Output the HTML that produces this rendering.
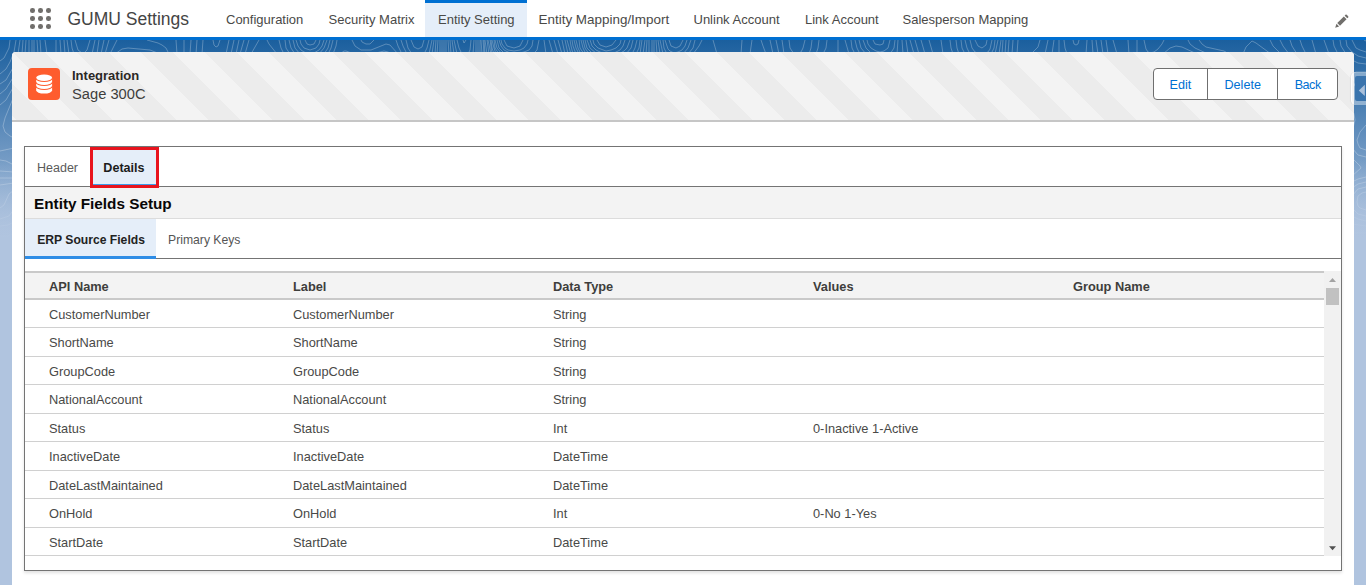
<!DOCTYPE html>
<html><head><meta charset="utf-8">
<style>
*{box-sizing:border-box;margin:0;padding:0}
html,body{width:1366px;height:585px;overflow:hidden}
body{position:relative;background:#b0c4df;font-family:"Liberation Sans",sans-serif;color:#080707}
.a{position:absolute;white-space:nowrap;line-height:1}
#nav{position:absolute;left:0;top:0;width:1366px;height:40px;background:#fff;border-bottom:3px solid #0070d2}
.dot{position:absolute;width:4.6px;height:4.6px;border-radius:50%;background:#706e6b}
.tab{font-size:13px;color:#494947;top:13.1px}
#band{position:absolute;left:0;top:40px;width:1366px;height:200px;background:linear-gradient(to top,rgba(27,95,158,0) 0,#1b5f9e 100%)}
#band2{position:absolute;left:0;top:40px;width:1366px;height:200px;background:linear-gradient(to bottom,rgba(176,196,223,0) 60%,#b0c4df 100%)}
#card{position:absolute;left:12px;top:52px;width:1342px;height:560px;background:#fff;border-radius:4px 4px 0 0;overflow:hidden}
#hdr{position:absolute;left:0;top:0;width:1342px;height:70px;background-color:#f3f3f3;
background-image:linear-gradient(45deg,rgba(0,0,0,.028) 25%,transparent 25%,transparent 50%,rgba(0,0,0,.028) 50%,rgba(0,0,0,.028) 75%,transparent 75%,transparent);
background-size:64px 64px;border-bottom:2px solid #c6c6c6}
.btn{position:absolute;top:68px;height:32px;border:1px solid #6f6f6f;background:#fff}
.btxt{font-size:12.6px;color:#0070d2;top:79.1px}
#box{position:absolute;left:24px;top:146px;width:1318px;height:425px;border:1px solid #747474;box-shadow:0 2px 3px rgba(0,0,0,.12)}
.th{font-size:12.8px;font-weight:bold;color:#3e3e3c}
.td{font-size:12.8px;color:#494947}
.rl{position:absolute;left:25px;width:1299px;height:1px;background:#d0d0d0}
</style></head><body>
<div id="nav"></div>
<!-- waffle -->
<div class="dot" style="left:30px;top:8.1px"></div><div class="dot" style="left:38.2px;top:8.1px"></div><div class="dot" style="left:46.4px;top:8.1px"></div>
<div class="dot" style="left:30px;top:16.2px"></div><div class="dot" style="left:38.2px;top:16.2px"></div><div class="dot" style="left:46.4px;top:16.2px"></div>
<div class="dot" style="left:30px;top:24.3px"></div><div class="dot" style="left:38.2px;top:24.3px"></div><div class="dot" style="left:46.4px;top:24.3px"></div>
<div class="a" style="left:67.5px;top:10.9px;font-size:17.5px;color:#444">GUMU Settings</div>
<div style="position:absolute;left:425px;top:0;width:102px;height:37px;background:#e5eef9;border-top:3px solid #0070d2"></div>
<div class="a tab" style="left:226px">Configuration</div>
<div class="a tab" style="left:328.5px">Security Matrix</div>
<div class="a tab" style="left:438px">Entity Setting</div>
<div class="a tab" style="left:538.5px;font-size:13.45px">Entity Mapping/Import</div>
<div class="a tab" style="left:693.5px">Unlink Account</div>
<div class="a tab" style="left:805px">Link Account</div>
<div class="a tab" style="left:902.5px">Salesperson Mapping</div>
<!-- pencil -->
<svg style="position:absolute;left:1333px;top:12px" width="18" height="18" viewBox="0 0 18 18">
<g fill="#706e6b" transform="translate(2.2 15.8) scale(0.9) translate(-2 -16)"><path d="M2 16 L3.4 11.6 L6.4 14.6 Z"/><path d="M4.3 10.7 L11.6 3.4 L14.6 6.4 L7.3 13.7 Z"/><path d="M12.5 2.5 L13.4 1.6 Q14.1 1 14.8 1.6 L16.4 3.2 Q17 3.9 16.4 4.6 L15.5 5.5 Z"/></g>
</svg>
<div id="band"></div><svg id="topo" style="position:absolute;left:0;top:40px" width="1366" height="200" viewBox="0 0 1366 200"><path fill="none" stroke="#fff" stroke-opacity=".3" stroke-width="0.9" d="M597 0 L600 5 L606 7 L612 5 L616 0 M593 0 L594 4 L598 8 L606 11 L611 10 L616 8 L620 4 L621 0 M463 0 L464 3 L466 0 M590 0 L592 6 L596 10 L602 13 L608 14 L614 13 L620 10 L623 6 L625 0 M457 0 L459 8 L462 14 M468 14 L470 10 L471 0 M587 0 L590 8 L597 14 M619 14 L624 11 L627 8 L630 0 M454 0 L457 14 M473 14 L474 0 M585 0 L587 8 L593 14 M626 14 L631 8 L633 0 M452 0 L454 14 M476 14 L476 0 M583 0 L585 8 L589 14 M632 14 L635 8 L637 0 M450 0 L451 14 M478 14 L478 0 M581 0 L583 8 L586 14 M636 14 L639 8 L640 0 M873 0 L875 4 L880 5 L883 4 L884 0 M448 0 L449 14 M480 14 L480 0 M579 0 L580 8 L584 14 M640 14 L642 0 M867 0 L868 4 L871 8 L876 11 L880 12 L884 11 L888 8 L890 0 M1073 0 L1074 4 L1076 5 L1078 4 L1079 0 M1364 0 L1366 1 M446 0 L446 14 M482 14 L481 0 M576 0 L578 8 L581 14 M643 14 L645 0 M863 0 L866 8 L872 14 M890 14 L894 8 L895 0 M1064 0 L1065 8 L1067 14 M1086 14 L1087 0 M1352 0 L1354 4 L1356 8 L1360 10 L1366 12 M1366 152 L1362 153 L1358 156 L1357 162 L1358 166 L1360 168 L1366 170 M444 0 L444 14 M484 14 L483 0 M574 0 L576 8 L579 14 M646 14 L647 0 M859 0 L861 8 L866 14 M897 14 L898 0 M1059 0 L1059 14 M1093 14 L1092 0 M1346 0 L1347 6 L1352 12 L1358 16 L1366 18 M1366 147 L1358 149 L1352 156 M1352 168 L1358 174 L1366 176 M442 0 L442 14 M485 14 L484 0 M572 0 L573 6 L576 14 M649 14 L649 0 M855 0 L857 8 L860 14 M903 14 L902 0 M1054 0 L1052 14 M1098 14 L1096 0 M1340 0 L1341 6 L1346 14 M1352 20 L1358 23 L1366 24 M142 14 L126 14 M1366 85 L1360 92 L1357 100 L1358 104 L1360 108 L1366 110 M1366 142 L1358 144 L1352 148 M1352 176 L1358 179 L1366 181 M440 0 L440 14 M487 14 L485 0 M570 0 L571 6 L573 14 M652 14 L652 0 M851 0 L852 8 L855 14 M908 14 L906 0 M1048 0 L1045 14 M1103 14 L1101 0 M1333 0 L1334 6 L1338 14 M1352 69 L1354 74 L1355 80 L1352 92 M1352 108 L1358 115 L1366 117 M160 14 L150 10 L128 8 L122 9 L115 14 M1366 53 L1362 52 L1358 50 L1355 46 L1352 39 M1352 34 L1356 32 L1366 32 M14 193 L8 196 L0 196 M1366 137 L1358 139 L1352 142 M1352 184 L1366 186 M45 0 L47 14 M56 14 L56 0 M117 0 L110 14 M14 182 L8 185 L0 186 M259 0 L251 14 M169 14 L166 8 L162 5 L158 3 L147 0 M392 14 L388 12 L384 11 L372 14 M354 14 L346 11 L344 11 L340 14 M277 14 L269 4 L267 0 M438 0 L437 14 M489 14 L487 0 M567 0 L571 14 M654 14 L654 0 M845 0 L849 14 M914 14 L910 0 M1040 0 L1038 7 L1031 14 M1108 14 L1106 0 M1324 0 L1329 14 M1352 118 L1360 126 L1361 128 L1352 136 M1352 193 L1366 193 M40 0 L41 14 M61 14 L60 0 M109 0 L105 14 M14 168 L12 172 L9 176 L0 179 M249 0 L245 14 M177 14 L176 0 M337 0 L336 6 L333 14 M284 14 L281 8 L279 0 M398 14 L390 5 L386 4 L371 10 L361 10 L355 6 L352 0 M436 0 L435 14 M565 0 L568 14 M491 14 L488 0 M838 0 L838 14 M707 14 L704 13 L701 14 M657 14 L656 0 M752 0 L750 14 M766 14 L763 6 L761 0 M919 14 L915 0 M1018 0 L1017 14 M1117 14 L1113 0 M1312 0 L1316 14 M37 0 L38 14 M65 14 L64 0 M104 0 L101 14 M14 150 L9 154 L4 165 L0 168 M244 0 L240 14 M184 14 L184 0 M333 0 L331 8 L328 14 M290 14 L286 8 L285 0 M374 0 L370 4 L366 4 L362 2 L361 0 M434 0 L432 14 M402 14 L398 6 L396 0 M562 0 L565 14 M492 14 L490 0 M702 0 L699 6 L693 14 M660 14 L658 0 M742 0 L741 14 M717 14 L713 0 M827 0 L826 8 L823 14 M773 14 L770 0 M1013 0 L1012 14 M925 14 L921 0 M1129 14 L1128 0 M1300 0 L1302 6 L1306 14 M1186 14 L1178 13 L1172 14 M34 0 L34 14 M14 143 L0 145 M99 0 L97 14 M69 14 L67 0 M239 0 L236 14 M190 14 L191 0 M330 0 L328 8 L324 14 M295 14 L291 8 L289 0 M432 0 L429 14 M407 14 L403 6 L401 0 M558 0 L562 14 M494 14 L492 8 L491 0 M695 0 L693 8 L688 14 M663 14 L660 0 M819 0 L818 8 L816 14 M779 14 L776 0 M1009 0 L1008 14 M933 14 L929 0 M1290 0 L1292 6 L1297 14 M1197 14 L1182 7 L1176 6 L1170 8 L1163 14 M1137 14 L1137 0 M32 0 L32 14 M14 69 L13 78 L14 85 M14 138 L0 138 M95 0 L92 14 M74 14 L72 8 L71 0 M234 0 L231 14 M196 14 L197 0 M327 0 L324 8 L319 14 M300 14 L295 8 L293 0 M429 0 L427 8 L424 14 M412 14 L408 8 L406 0 M554 0 L558 14 M496 14 L494 8 L492 0 M691 0 L688 8 L683 14 M667 14 L664 8 L663 0 M812 0 L811 8 L809 14 M784 14 L782 0 M1006 0 L1005 14 M943 14 L941 0 M1164 0 L1162 4 L1158 9 L1154 12 L1150 13 L1148 12 L1146 9 L1144 0 M1280 0 L1283 6 L1289 14 M1208 14 L1195 8 L1190 4 L1188 0 M29 0 L29 14 M14 56 L5 78 L3 86 L5 92 L10 96 L14 98 M14 132 L0 131 M90 0 L87 10 L84 13 L82 13 L78 10 L75 0 M229 0 L226 14 M202 14 L203 0 M324 0 L322 6 L319 10 L314 13 L310 14 L304 12 L301 10 L298 6 L296 0 M424 0 L422 7 L418 9 L414 7 L411 0 M549 0 L553 14 M499 14 L495 8 L494 0 M687 0 L685 6 L682 10 L678 12 L674 13 L670 11 L668 9 L665 0 M805 0 L803 8 L801 12 L798 14 M794 14 L790 8 L789 0 M1003 0 L1002 14 M953 14 L951 8 L950 0 M1270 0 L1273 6 L1281 14 M1229 14 L1224 11 L1206 7 L1202 4 L1199 0 M26 0 L25 14 M14 46 L6 60 L0 65 M220 0 L218 6 L216 7 L214 5 L213 0 M320 0 L319 4 L316 8 L310 10 L304 8 L301 4 L300 0 M544 0 L546 14 M502 14 L497 8 L495 0 M683 0 L680 6 L676 8 L671 6 L669 0 M1001 0 L999 14 M959 14 L957 8 L956 0 M1243 14 L1246 7 L1252 1 L1256 3 L1271 14 M0 111 L14 108 M14 125 L6 121 L0 120 M23 0 L22 14 M14 36 L6 49 L0 54 M316 0 L314 4 L310 5 L307 4 L305 0 M539 0 L537 10 L533 14 M505 14 L499 8 L497 0 M998 0 L995 14 M965 14 L962 8 L961 0 M20 0 L18 14 M14 26 L6 40 L0 44 M533 0 L532 6 L529 10 L524 12 L516 14 L510 13 L504 10 L501 6 L499 0 M995 0 L994 8 L991 14 M970 14 L967 8 L965 0 M16 0 L14 12 L10 22 L6 29 L0 34 M528 0 L527 4 L524 8 L520 10 L514 11 L508 10 L505 8 L502 4 L501 0 M992 0 L990 9 L988 12 L984 14 M979 14 L975 12 L972 8 L970 0 M10 0 L9 8 L6 14 L4 18 L0 21 M523 0 L520 6 L514 8 L507 6 L504 0 M987 0 L986 5 L982 8 L978 6 L975 0"/></svg><div id="band2"></div>
<div id="card">
  <div id="hdr"></div>
</div>
<!-- utility toggle -->
<div style="position:absolute;left:1350.5px;top:72px;width:30px;height:33px;border-radius:5px;background:rgba(255,255,255,.4);border-left:1.5px solid rgba(255,255,255,.9);box-shadow:-1px 0 1px rgba(0,0,0,.06)"></div>
<div style="position:absolute;left:1355px;top:76px;width:20px;height:25px;border-radius:2px;background:#3a74ad"></div>
<svg style="position:absolute;left:1355px;top:76px" width="11" height="25" viewBox="0 0 11 25"><path d="M3.8 14.6 L9.8 8.8 L9.8 20 Z" fill="#a9c0db"/></svg>
<!-- header contents -->
<div style="position:absolute;left:28px;top:68px;width:32px;height:32px;border-radius:4px;background:#fe5c2e"></div>
<svg style="position:absolute;left:28px;top:68px" width="32" height="32" viewBox="0 0 32 32">
<path fill="#fff" d="M8.2 9.75 A7.95 3.25 0 0 1 24.1 9.75 L24.1 22.35 A7.95 3.25 0 0 1 8.2 22.35 Z"/>
<g fill="none" stroke="#fe5c2e" stroke-width="1.1">
<path d="M8 10.3 A8.15 3.25 0 0 0 24.3 10.3"/>
<path d="M8 14.3 A8.15 3.25 0 0 0 24.3 14.3"/>
<path d="M8 18.3 A8.15 3.25 0 0 0 24.3 18.3"/>
</g></svg>
<div class="a" style="left:72px;top:69px;font-size:13px;font-weight:bold;color:#2b2826">Integration</div>
<div class="a" style="left:72px;top:87.3px;font-size:14.7px;color:#3e3e3c">Sage 300C</div>
<div class="btn" style="left:1153px;width:56px;border-radius:4px 0 0 4px"></div>
<div class="btn" style="left:1207px;width:71px;border-radius:0"></div>
<div class="btn" style="left:1277px;width:61px;border-radius:0 4px 4px 0"></div>
<div class="a btxt" style="left:1169.5px">Edit</div>
<div class="a btxt" style="left:1224.5px">Delete</div>
<div class="a btxt" style="left:1294.7px;letter-spacing:-0.5px">Back</div>

<!-- content box -->
<div id="box"></div>
<div style="position:absolute;left:25px;top:186px;width:1316px;height:1px;background:#747474"></div>
<div style="position:absolute;left:25px;top:187px;width:1316px;height:32px;background:#f3f3f3;border-bottom:1px solid #dcdcdc"></div>
<div style="position:absolute;left:91px;top:148px;width:67px;height:38px;background:#e5eef9;border-bottom:2px solid #3d9be9"></div>
<div style="position:absolute;left:90px;top:147px;width:69px;height:41px;border:3px solid #e8141e"></div>
<div class="a" style="left:37px;top:162.3px;font-size:12.5px;color:#5a5a5a">Header</div>
<div class="a" style="left:103.3px;top:162.2px;font-size:12.6px;font-weight:bold;color:#1c1c1c">Details</div>
<div class="a" style="left:34px;top:195.6px;font-size:15.3px;font-weight:bold;color:#080707">Entity Fields Setup</div>
<div style="position:absolute;left:25px;top:219px;width:131px;height:40px;background:#e5eef9;border-bottom:3px solid #2e8de6"></div>
<div style="position:absolute;left:156px;top:258px;width:1185px;height:1px;background:#747474"></div>
<div class="a" style="left:37.2px;top:233.6px;font-size:12.15px;font-weight:bold;color:#222">ERP Source Fields</div>
<div class="a" style="left:168px;top:233.9px;font-size:12.2px;color:#555">Primary Keys</div>

<!-- table -->
<div style="position:absolute;left:25px;top:271px;width:1299px;height:29px;background:#f3f3f3;border-top:2px solid #c9c9c9;border-bottom:2px solid #c9c9c9"></div>
<div class="a th" style="left:49px;top:280.8px">API Name</div>
<div class="a th" style="left:293px;top:280.8px">Label</div>
<div class="a th" style="left:553px;top:280.8px">Data Type</div>
<div class="a th" style="left:813px;top:280.8px">Values</div>
<div class="a th" style="left:1073px;top:280.8px">Group Name</div>
<div style="position:absolute;left:1324px;top:271px;width:17px;height:285px;background:#f1f1f1"></div>
<svg style="position:absolute;left:1324px;top:271px" width="17" height="290" viewBox="0 0 17 290">
<path d="M5 11 L8.5 7 L12 11 Z" fill="#a3a3a3"/>
<rect x="2" y="17" width="13" height="17" fill="#c1c1c1"/>
<path d="M5 275.3 L12 275.3 L8.5 279.3 Z" fill="#505050"/>
</svg>
<!--ROWS-->
<div class="a td" style="left:49px;top:308.86px">CustomerNumber</div>
<div class="a td" style="left:293px;top:308.86px">CustomerNumber</div>
<div class="a td" style="left:553px;top:308.86px">String</div>
<div class="a td" style="left:49px;top:337.30px">ShortName</div>
<div class="a td" style="left:293px;top:337.30px">ShortName</div>
<div class="a td" style="left:553px;top:337.30px">String</div>
<div class="a td" style="left:49px;top:365.74px">GroupCode</div>
<div class="a td" style="left:293px;top:365.74px">GroupCode</div>
<div class="a td" style="left:553px;top:365.74px">String</div>
<div class="a td" style="left:49px;top:394.18px">NationalAccount</div>
<div class="a td" style="left:293px;top:394.18px">NationalAccount</div>
<div class="a td" style="left:553px;top:394.18px">String</div>
<div class="a td" style="left:49px;top:422.62px">Status</div>
<div class="a td" style="left:293px;top:422.62px">Status</div>
<div class="a td" style="left:553px;top:422.62px">Int</div>
<div class="a td" style="left:813px;top:422.62px">0-Inactive 1-Active</div>
<div class="a td" style="left:49px;top:451.06px">InactiveDate</div>
<div class="a td" style="left:293px;top:451.06px">InactiveDate</div>
<div class="a td" style="left:553px;top:451.06px">DateTime</div>
<div class="a td" style="left:49px;top:479.50px">DateLastMaintained</div>
<div class="a td" style="left:293px;top:479.50px">DateLastMaintained</div>
<div class="a td" style="left:553px;top:479.50px">DateTime</div>
<div class="a td" style="left:49px;top:507.94px">OnHold</div>
<div class="a td" style="left:293px;top:507.94px">OnHold</div>
<div class="a td" style="left:553px;top:507.94px">Int</div>
<div class="a td" style="left:813px;top:507.94px">0-No 1-Yes</div>
<div class="a td" style="left:49px;top:537.28px">StartDate</div>
<div class="a td" style="left:293px;top:537.28px">StartDate</div>
<div class="a td" style="left:553px;top:537.28px">DateTime</div>
<div class="rl" style="top:327px"></div>
<div class="rl" style="top:356px"></div>
<div class="rl" style="top:384px"></div>
<div class="rl" style="top:413px"></div>
<div class="rl" style="top:441px"></div>
<div class="rl" style="top:470px"></div>
<div class="rl" style="top:498px"></div>
<div class="rl" style="top:527px"></div>
<div class="rl" style="top:555px"></div>
<!--/ROWS-->
</body></html>
